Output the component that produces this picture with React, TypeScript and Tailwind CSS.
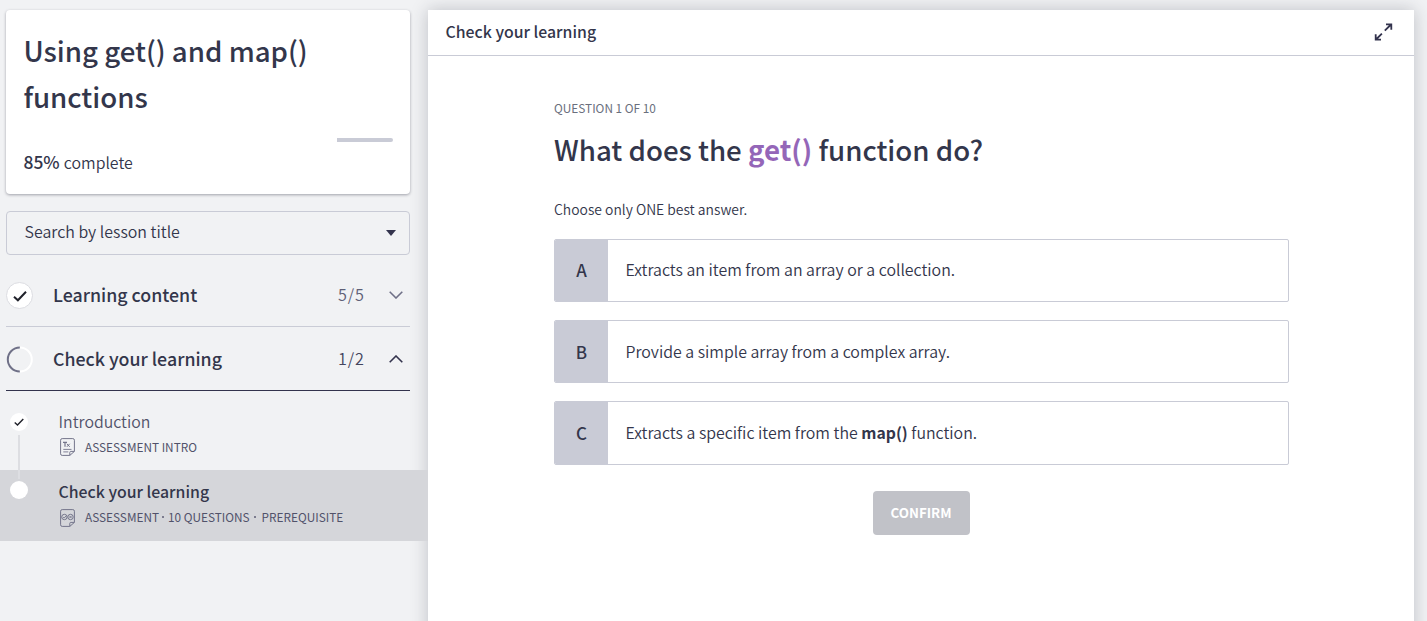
import type { ReactNode } from "react";

function Dot({ className }: { className: string }) {
  return <span className={`inline-block h-[2px] w-[2px] rounded-full bg-[#5e5e75] ${className}`} />;
}

function Check({ size }: { size: number }) {
  return (
    <svg width={size} height={size} viewBox="0 0 14 14" fill="none" stroke="#20222b" strokeWidth="2">
      <path d="M1 7.8 4.9 11.3 13 2.8" />
    </svg>
  );
}

function Chevron({ up }: { up?: boolean }) {
  return (
    <svg width="14" height="8" viewBox="0 0 14 8" fill="none" stroke={up ? "#33334d" : "#6f7087"} strokeWidth="1.6">
      <path d={up ? "M.7 7.2 7 1 13.3 7.2" : "M.7 .8 7 7 13.3 .8"} />
    </svg>
  );
}

function DocIcon({ quiz }: { quiz?: boolean }) {
  return (
    <svg className="shrink-0" width="15" height="18" viewBox="0 0 15 18" fill="none" stroke="#74758b" strokeWidth="1">
      <path d="M9.8 17.4H2.2A1.6 1.6 0 0 1 .6 15.8V2.2A1.6 1.6 0 0 1 2.2.6h10.6a1.6 1.6 0 0 1 1.6 1.6v11.2Z" />
      <path d="M9.8 17.4v-3.1q0-.9.9-.9h3.7" />
      {quiz ? (
        <>
          <circle cx="4.4" cy="8" r="2.7" />
          <circle cx="10.5" cy="8" r="2.7" />
          <path d="m3.1 8 1.1 1.1L5.9 7M9.3 6.8l2.4 2.4m0-2.4L9.3 9.2" strokeWidth=".9" />
        </>
      ) : (
        <>
          <path d="M3 4.4h4M5 4.4v4.4" strokeWidth="1.2" />
          <path d="m6.9 5.8 2.8 3m0-3-2.8 3" strokeWidth="1" />
          <path d="M3.3 11.4h8.2M3.3 13.9h5" strokeWidth=".9" />
        </>
      )}
    </svg>
  );
}

function Section({ icon, title, count, up }: { icon: ReactNode; title: string; count: string; up?: boolean }) {
  return (
    <div
      className={`ml-[6px] flex h-16 w-[404px] items-center border-b pt-px ${
        up ? "border-[#33334d]" : "border-[#caccd6]"
      }`}
    >
      <div className="flex w-[47px]">{icon}</div>
      <div className="w-[285px] pb-[2px] text-[17.8px] font-medium">{title}</div>
      <div
        className={`w-[48px] pb-[2px] text-[16.2px] font-[350] tracking-[0.9px] ${
          up ? "text-[#44455d]" : "text-[#5e5f76]"
        }`}
      >
        {count}
      </div>
      <div className="pb-px pl-[3px]">
        <Chevron up={up} />
      </div>
    </div>
  );
}

function Answer({ letter, className, children }: { letter: string; className: string; children: ReactNode }) {
  return (
    <div className={`flex w-[735px] overflow-hidden rounded-[2px] border border-[#c9cbd6] ${className}`}>
      <div className="w-[53px] bg-[#c9cbd6] text-center text-[17px] font-medium">{letter}</div>
      <p className="pl-[17.5px] text-[15.92px] font-[350]">{children}</p>
    </div>
  );
}

export default function App() {
  return (
    <div className="flex h-[621px] w-[1427px] overflow-hidden bg-[#f1f2f4] font-['Noto_Sans_CJK_SC','Noto_Sans',sans-serif] text-[#33364b]">
      <aside className="w-[428px] shrink-0 pt-[10px]">
        <div className="ml-[6px] h-[184px] w-[404px] rounded-[4px] bg-white px-[18px] pt-[17px] shadow-[0_1px_3px_rgba(40,42,60,0.4)]">
          <h1 className="-ml-[0.6px] w-[330px] text-[27.65px] leading-[46px] font-medium">Using get() and map() functions</h1>
          <div className="mt-[19px] flex h-1 justify-end">
            <div className="-mr-px h-1 w-14 rounded-r-[2px] bg-[#c9cbd6]" />
          </div>
          <p className="mt-[8px] -ml-[0.5px] text-[15.9px] leading-6 font-[350]">
            <span className="mr-[0.6px] text-[17.4px] font-medium">85%</span> complete
          </p>
        </div>

        <div className="mt-[17px] ml-[6px] flex h-11 w-[404px] items-center justify-between rounded-[4px] border border-[#c9cbd6] pr-[13px] pl-[17.5px]">
          <span className="pb-[4px] text-[15.95px] leading-6 font-[350]">Search by lesson title</span>
          <svg width="10" height="6" viewBox="0 0 10 6" fill="#33334d">
            <path d="M0 0h10L5 6Z" />
          </svg>
        </div>

        <div className="mt-[8px]">
          <Section
            title="Learning content"
            count="5/5"
            icon={
              <div className="flex h-[27px] w-[27px] items-center justify-center rounded-full border border-[#dcdde2] bg-white pt-px">
                <Check size={14} />
              </div>
            }
          />
          <Section
            up
            title="Check your learning"
            count="1/2"
            icon={
              <svg width="27" height="27" viewBox="0 0 27 27" fill="none" strokeWidth="2">
                <path d="M13.8 1.5a12 12 0 0 1 0 24" stroke="#fff" />
                <path d="M13.8 25.5a12 12 0 0 1 0-24" stroke="#6f7087" />
              </svg>
            }
          />
        </div>

        <div className="relative">
          <div className="absolute top-[44px] left-[18px] z-10 h-11 w-[2px] bg-[#dddee2]" />
          <div className="flex h-[79px]">
            <div className="w-[58px] pt-[22px] pl-[10px]">
              <div className="flex h-[18px] w-[18px] items-center justify-center rounded-full bg-white">
                <Check size={10} />
              </div>
            </div>
            <div className="pt-[19px] text-[#51526a]">
              <p className="pl-[0.5px] text-[15.89px] leading-6 font-[350]">Introduction</p>
              <div className="mt-[4px] flex h-[18px] items-center pl-[2px] text-[11.8px]">
                <DocIcon />
                <span className="pl-[10px]">ASSESSMENT INTRO</span>
              </div>
            </div>
          </div>
          <div className="flex h-[71px] bg-[#d5d6da]">
            <div className="w-[58px] pt-[11px] pl-[10px]">
              <div className="h-[18px] w-[18px] rounded-full bg-white" />
            </div>
            <div className="pt-[10px]">
              <p className="pl-[0.5px] text-[15.85px] leading-6 font-medium">Check your learning</p>
              <div className="mt-[4px] flex h-[18px] items-center pl-[2px] text-[11.8px] text-[#51526a]">
                <div className="pt-[2px]">
                  <DocIcon quiz />
                </div>
                <span className="pl-[10px]">ASSESSMENT</span>
                <Dot className="mr-[4px] ml-[3px]" />
                <span>10 QUESTIONS</span>
                <Dot className="mr-[5.5px] ml-[4.5px]" />
                <span>PREREQUISITE</span>
              </div>
            </div>
          </div>
        </div>
      </aside>

      <main className="mt-[10px] h-[640px] w-[986px] shrink-0 bg-white shadow-[0_0_16px_rgba(40,42,60,0.25)]">
        <header className="flex h-[46px] items-center justify-between border-b border-[#c9cbd6] pr-[21px] pl-[17.5px]">
          <h2 className="pb-[2px] text-[15.85px] font-medium">Check your learning</h2>
          <svg width="19" height="19" viewBox="0 0 19 19" fill="none" stroke="#33334d" strokeWidth="1.8">
            <path d="M10.8 7.7 17 1.5M12 1.4h5.3v5.3M7.9 10.6 2 16.5M1.7 11.3v5.3H7" />
          </svg>
        </header>
        <div className="ml-[126px] w-[735px] pt-[42px]">
          <p className="text-[11.84px] leading-5 text-[#6a6f7d]">QUESTION 1 OF 10</p>
          <h3 className="mt-[8px] text-[27.65px] leading-[46px] font-medium">
            What does the <strong className="font-bold text-[#9466b8]">get()</strong> function do?
          </h3>
          <p className="mt-[27px] text-[13.9px] leading-5 font-[350]">Choose only ONE best answer.</p>
          <div className="mt-[20px] flex flex-col gap-[18px]">
            <Answer letter="A" className="h-[63px] leading-[60px]">
              Extracts an item from an array or a collection.
            </Answer>
            <Answer letter="B" className="h-[63px] leading-[62px]">
              Provide a simple array from a complex array.
            </Answer>
            <Answer letter="C" className="h-[64px] leading-[62px]">
              Extracts a specific item from the <strong className="text-[15.75px] font-bold">map()</strong> function.
            </Answer>
          </div>
          <div className="mt-[26px] flex justify-center">
            <button className="h-11 w-[97px] rounded-[4px] bg-[#c1c2c8] pr-px text-[13.3px] font-bold text-white">CONFIRM</button>
          </div>
        </div>
      </main>
    </div>
  );
}
